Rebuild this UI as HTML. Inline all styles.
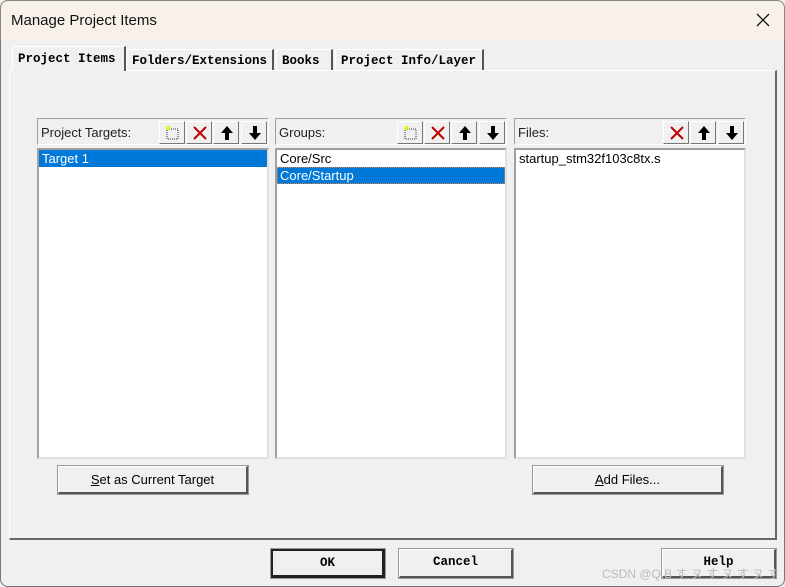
<!DOCTYPE html>
<html><head><style>
*{margin:0;padding:0;box-sizing:border-box}
body{width:785px;height:587px;background:#f0f0f0;position:relative;overflow:hidden;font-family:"Liberation Sans",sans-serif;font-size:13px;color:#000}
.a{position:absolute}
.title{left:0;top:0;width:785px;height:40px;background:#f8f1e9;border-radius:8px 8px 0 0;border:1px solid #888;border-bottom:none}
.win{left:0;top:0;width:785px;height:587px;border:1px solid #777;border-radius:8px}
.mono{font-family:"Liberation Mono","DejaVu Sans Mono",monospace;font-weight:bold;font-size:12.5px}
.tab{height:21px;top:49px;border:1px solid #fff;border-right:2px solid #555;border-bottom:none;padding:4px 0 0 5px;background:#f0f0f0}
.panel{left:9px;top:70px;width:768px;height:470px;border:1px solid #fff;border-right:2px solid #666;border-bottom:2px solid #666}
.hdr{height:27px;border:1px solid #a0a0a0;border-right-color:#fff;border-bottom-color:#fff;padding:6px 0 0 3px;color:#222}
.list{background:#fff;border:2px solid #a0a0a0;border-right-color:#e0e0e0;border-bottom-color:#e0e0e0}
.row{height:17px;padding:1px 3px;line-height:15px}
.sel{background:#0078d7;color:#fff}
.tb{top:121px;width:26px;height:23px;border:1px solid #fff;border-right-color:#777;border-bottom-color:#777;background:#f0f0f0}
.tb svg{position:absolute;left:5px;top:3px}
.btn{border:1px solid #fff;border-right:2px solid #555;border-bottom:2px solid #555;outline:1px solid #999;background:#f0f0f0;text-align:center;line-height:25px}
</style></head><body>
<div class="a win"></div>
<div class="a title"></div>
<div class="a" style="left:11px;top:12px;font-size:15px;color:#111">Manage Project Items</div>
<svg class="a" style="left:756px;top:13px" width="14" height="14"><path d="M1 1L13 13M13 1L1 13" stroke="#111" stroke-width="1.3"/></svg>

<div class="a panel"></div>
<div class="a tab mono" style="left:12px;top:46px;width:114px;height:25px;border-bottom:none;padding-top:5px">Project Items</div>
<div class="a tab mono" style="left:126px;width:148px">Folders/Extensions</div>
<div class="a tab mono" style="left:276px;width:57px">Books</div>
<div class="a tab mono" style="left:335px;width:149px">Project Info/Layer</div>

<div class="a hdr" style="left:37px;top:118px;width:232px">Project Targets:</div>
<div class="a hdr" style="left:275px;top:118px;width:232px">Groups:</div>
<div class="a hdr" style="left:514px;top:118px;width:232px">Files:</div>

<div class="a tb" style="left:159px"><svg width="16" height="16"><rect x="2" y="4" width="11" height="10" fill="none" stroke="#333" stroke-dasharray="1,1"/><path d="M2 1l2 3M1 4h3M5 1l-1 3" stroke="#ee0" stroke-width="1.5"/></svg></div>
<div class="a tb" style="left:186px"><svg width="16" height="16"><path d="M2 2L14 14M14 2L2 14" stroke="#b00" stroke-width="2"/></svg></div>
<div class="a tb" style="left:213px"><svg width="16" height="16"><path d="M8 1L14 8H10V15H6V8H2Z" fill="#000"/></svg></div>
<div class="a tb" style="left:241px"><svg width="16" height="16"><path d="M8 15L14 8H10V1H6V8H2Z" fill="#000"/></svg></div>

<div class="a tb" style="left:397px"><svg width="16" height="16"><rect x="2" y="4" width="11" height="10" fill="none" stroke="#333" stroke-dasharray="1,1"/><path d="M2 1l2 3M1 4h3M5 1l-1 3" stroke="#ee0" stroke-width="1.5"/></svg></div>
<div class="a tb" style="left:424px"><svg width="16" height="16"><path d="M2 2L14 14M14 2L2 14" stroke="#b00" stroke-width="2"/></svg></div>
<div class="a tb" style="left:451px"><svg width="16" height="16"><path d="M8 1L14 8H10V15H6V8H2Z" fill="#000"/></svg></div>
<div class="a tb" style="left:479px"><svg width="16" height="16"><path d="M8 15L14 8H10V1H6V8H2Z" fill="#000"/></svg></div>

<div class="a tb" style="left:663px"><svg width="16" height="16"><path d="M2 2L14 14M14 2L2 14" stroke="#b00" stroke-width="2"/></svg></div>
<div class="a tb" style="left:690px"><svg width="16" height="16"><path d="M8 1L14 8H10V15H6V8H2Z" fill="#000"/></svg></div>
<div class="a tb" style="left:718px"><svg width="16" height="16"><path d="M8 15L14 8H10V1H6V8H2Z" fill="#000"/></svg></div>

<div class="a list" style="left:37px;top:148px;width:232px;height:311px"><div class="row sel">Target 1</div></div>
<div class="a list" style="left:275px;top:148px;width:232px;height:311px"><div class="row">Core/Src</div><div class="row sel" style="outline:1px dotted #e08040;outline-offset:-1px">Core/Startup</div></div>
<div class="a list" style="left:514px;top:148px;width:232px;height:311px"><div class="row">startup_stm32f103c8tx.s</div></div>

<div class="a btn" style="left:58px;top:466px;width:190px;height:28px;font-size:13px"><u>S</u>et as Current Target</div>
<div class="a btn" style="left:533px;top:466px;width:190px;height:28px"><u>A</u>dd Files...</div>

<div class="a btn mono" style="left:271px;top:549px;width:114px;height:29px;border:2px solid #222;border-right:3px solid #222;border-bottom:3px solid #222">OK</div>
<div class="a btn mono" style="left:399px;top:549px;width:114px;height:29px">Cancel</div>
<div class="a btn mono" style="left:662px;top:549px;width:114px;height:29px">Help</div>
<div class="a" style="left:602px;top:565px;font-size:12px;color:#bbb">CSDN @Q.B す ヌ す ヌ す ヌ す</div>
</body></html>
